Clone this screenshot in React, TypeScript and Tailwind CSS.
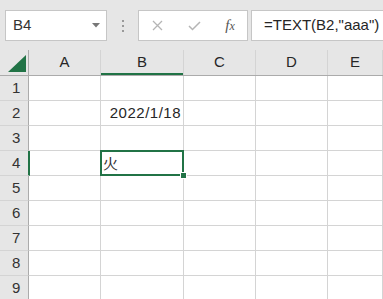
import React from "react";

const font = { fontFamily: '"Liberation Sans", "Noto Sans CJK JP", sans-serif' };

const cols = ["A", "B", "C", "D", "E"];
const colW = ["w-[72px]", "w-[83px]", "w-[72px]", "w-[72px]", "flex-1"];

export default function App() {
  const rows = [1, 2, 3, 4, 5, 6, 7, 8, 9];
  return (
    <div className="w-[383px] h-[299px] overflow-hidden bg-[#e6e6e6] text-[#262626]" style={font}>
      {/* formula bar */}
      <div className="h-[50px] flex items-start pt-[10px] pl-[5px]">
        <div className="w-[102px] h-[31px] bg-white border border-[#c6c6c6] flex items-center pl-[7px] pr-[6px] text-[15px] text-[#333]">
          <span className="flex-1">B4</span>
          <svg width="8" height="5" viewBox="0 0 8 5"><path d="M0 0 H8 L4 4.5 Z" fill="#777" /></svg>
        </div>
        <div className="w-[31px] h-[31px] flex flex-col items-center justify-center gap-[3px]">
          <span className="w-[2px] h-[2px] bg-[#999]" />
          <span className="w-[2px] h-[2px] bg-[#999]" />
          <span className="w-[2px] h-[2px] bg-[#999]" />
        </div>
        <div className="w-[110px] h-[31px] bg-white border border-[#c6c6c6] flex items-center">
          <div className="w-[36px] flex justify-center">
            <svg width="11" height="11" viewBox="0 0 11 11"><path d="M1 1 L10 10 M10 1 L1 10" stroke="#b5b5b5" strokeWidth="1.3" /></svg>
          </div>
          <div className="w-[38px] flex justify-center">
            <svg width="13" height="10" viewBox="0 0 13 10"><path d="M1 5 L4.5 8.5 L12 1" stroke="#b5b5b5" strokeWidth="1.5" fill="none" /></svg>
          </div>
          <div className="w-[34px] flex justify-center items-baseline italic text-[#555] leading-none" style={{ fontFamily: '"Liberation Serif", serif' }}>
            <span className="text-[15px]">f</span>
            <span className="text-[12px]">x</span>
          </div>
        </div>
        <div className="ml-[3px] flex-1 h-[31px] bg-white border border-[#c6c6c6] border-r-0 flex items-center pl-[12px] text-[15px] text-[#262626] whitespace-nowrap">
          =TEXT(B2,"aaa")
        </div>
      </div>

      {/* column header */}
      <div className="flex h-[26px] border-b border-[#ababab]">
        <div className="w-[29px] border-r border-[#ababab] flex items-end justify-end pr-[2px] pb-[3px]">
          <svg width="18" height="17" viewBox="0 0 18 17"><path d="M18 0 V17 H0 Z" fill="#217346" /></svg>
        </div>
        {cols.map((c, i) => (
          <div
            key={c}
            className={`${colW[i]} border-r border-[#d4d4d4] flex items-center justify-center text-[15px] text-[#262626] ${c === "B" ? "shadow-[inset_0_-2px_0_#217346]" : ""}`}
          >
            {c}
          </div>
        ))}
      </div>

      {/* rows */}
      {rows.map((r) => (
        <div key={r} className={`flex h-[25px] relative ${r === 4 ? "z-10" : ""}`}>
          <div
            className={`w-[29px] border-b border-[#d4d4d4] flex items-center pl-[12px] text-[15px] text-[#333] ${r === 4 ? "border-r-2 border-r-[#217346] w-[30px]" : "border-r border-r-[#ababab]"}`}
          >
            {r}
          </div>
          {cols.map((c, i) => {
            const w = r === 4 && i === 0 ? "w-[71px]" : colW[i];
            return (
              <div key={c} className={`${w} relative bg-white border-r border-b border-[#d4d4d4] flex items-center text-[15px] ${r === 4 && c === "B" ? "z-10" : ""}`}>
                {r === 2 && c === "B" && <span className="ml-auto pr-[2px] tracking-[0.5px] text-[#262626]">2022/1/18</span>}
                {r === 4 && c === "B" && (
                  <>
                    <span className="pl-[2px] text-[#333]" style={{ fontFamily: '"Noto Sans CJK JP", sans-serif' }}>火</span>
                    <div className="absolute -left-[1px] -top-[1px] -right-[1px] -bottom-[1px] border-2 border-[#217346]" />
                    <div className="absolute -right-[4px] -bottom-[4px] w-[7px] h-[7px] bg-[#217346] border border-white" />
                  </>
                )}
              </div>
            );
          })}
        </div>
      ))}
    </div>
  );
}
